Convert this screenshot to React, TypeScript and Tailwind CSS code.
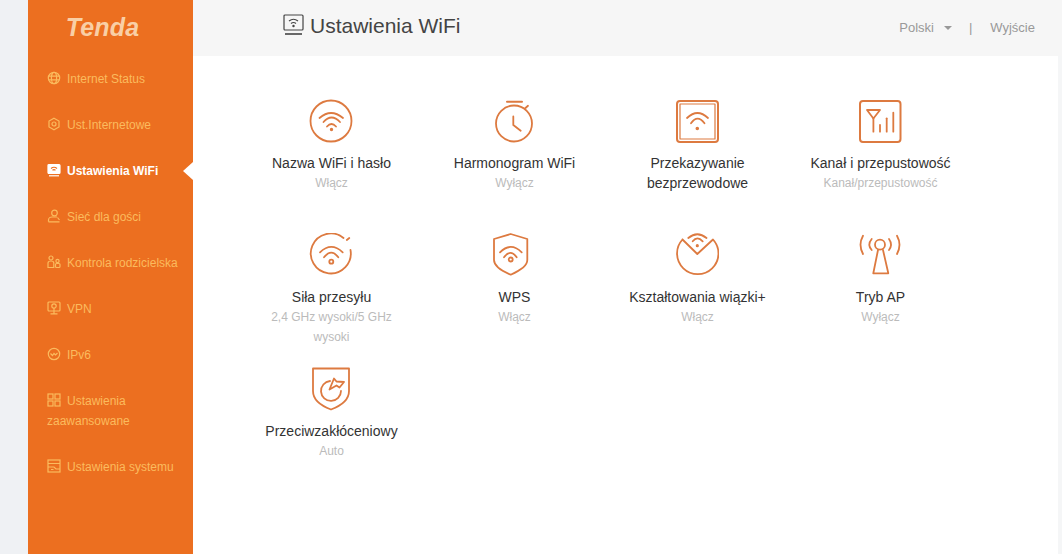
import type { ReactNode } from 'react';

const font = { fontFamily: '"Liberation Sans", Arial, sans-serif' };

function Big({ children }: { children: ReactNode }) {
    return (
        <svg width="44" height="44" viewBox="0 0 44 44" fill="none" stroke="#dd7a40" strokeWidth="1.8" strokeLinecap="round" strokeLinejoin="round" className="mr-[2px]">
            {children}
        </svg>
    );
}

const bigIcons: Record<string, ReactNode> = {
    name: (
        <>
            <circle cx="22" cy="22" r="20.5" />
            <path d="M10.5 19 Q22 9 34 19" />
            <path d="M14.5 23 Q22.5 14 31 23" />
            <path d="M18 27.5 Q22.5 22.5 27 27.5" />
            <circle cx="22.5" cy="30.5" r="0.8" fill="#dd7a40" />
        </>
    ),
    timer: (
        <>
            <circle cx="22" cy="24.5" r="18" />
            <path d="M15 2.8 H30" strokeWidth="2" />
            <path d="M33.5 9 L36 6.8" />
            <path d="M21.3 17.5 V26 L28.7 31.7" />
        </>
    ),
    bridge: (
        <>
            <rect x="2" y="2" width="41" height="41" rx="3" strokeWidth="2" />
            <rect x="5" y="5" width="35" height="35" strokeWidth="1.2" />
            <path d="M12 19 Q22.5 9 33 19" />
            <path d="M16 24.3 Q22.5 15 29.5 24.3" />
            <circle cx="22.3" cy="29.5" r="0.9" fill="#dd7a40" />
        </>
    ),
    channel: (
        <>
            <rect x="2" y="2" width="40.5" height="41" rx="3" strokeWidth="2" />
            <path d="M9 11 H22 L15.4 19.5 Z" />
            <path d="M15.4 19.5 V32.7" />
            <path d="M22 26 V32.7" />
            <path d="M28.7 19.3 V32.7" />
            <path d="M35.3 13.7 V32.7" />
        </>
    ),
    power: (
        <>
            <path d="M34.5 5 A20 20 0 1 0 41.5 17" />
            <path d="M37.8 7 L40.3 5" />
            <path d="M11 19.3 Q22.3 8.5 33.7 19.3" />
            <path d="M15 24.3 Q22.3 15 29.3 24.3" />
            <circle cx="22.3" cy="28.7" r="2" />
        </>
    ),
    wps: (
        <>
            <path d="M18.7 1 L35.3 6 V27 C35.3 33 26 38.5 18.7 41.7 C11 38.5 2 33 2 27 V6 Z" />
            <path d="M8 19.3 Q18.7 8.5 29.7 19.3" />
            <path d="M12 24.3 Q18.5 15.5 24.7 24.3" />
            <circle cx="18.7" cy="26.5" r="2" />
        </>
    ),
    beam: (
        <>
            <path d="M7.5 6.5 L22.3 21 L38 6.5 A20.7 20.7 0 1 1 7.5 6.5" />
            <path d="M13.3 5 Q22.3 -2.5 31.5 5" />
            <path d="M17.7 8.3 Q22.3 2.5 27.7 8.3" />
            <circle cx="22.3" cy="12.7" r="0.7" fill="#dd7a40" />
        </>
    ),
    ap: (
        <>
            <circle cx="22" cy="11.7" r="5" />
            <path d="M20 17 L15.3 40.3 H30.3 L25 17" />
            <path d="M5 2.7 Q0 11.7 5 21" />
            <path d="M13.7 6 Q9 11.7 13.7 17" />
            <path d="M39 2.7 Q44 11.7 39 21" />
            <path d="M31 6 Q35 11.7 31 17" />
        </>
    ),
    jam: (
        <>
            <path d="M4 1.5 H40 V24 C40 34 30 39.5 22 42.5 C14 39.5 4 34 4 24 Z" />
            <path d="M21 14 A10 10 0 1 0 32 24" />
            <path d="M20.5 22.5 L25 11.5 L27.5 14.5 L35 15 L30.5 20.5 L27.5 18.5 Z" />
        </>
    ),
};

const cards = [
    { icon: 'name', title: 'Nazwa WiFi i hasło', sub: 'Włącz' },
    { icon: 'timer', title: 'Harmonogram WiFi', sub: 'Wyłącz' },
    { icon: 'bridge', title: 'Przekazywanie bezprzewodowe', sub: '' },
    { icon: 'channel', title: 'Kanał i przepustowość', sub: 'Kanał/przepustowość' },
    { icon: 'power', title: 'Siła przesyłu', sub: '2,4 GHz wysoki/5 GHz wysoki' },
    { icon: 'wps', title: 'WPS', sub: 'Włącz' },
    { icon: 'beam', title: 'Kształtowania wiązki+', sub: 'Włącz' },
    { icon: 'ap', title: 'Tryb AP', sub: 'Wyłącz' },
    { icon: 'jam', title: 'Przeciwzakłóceniowy', sub: 'Auto' },
];

const smallIcons: Record<string, ReactNode> = {
    globe: (
        <>
            <circle cx="7" cy="7" r="5.7" />
            <ellipse cx="7" cy="7" rx="2.6" ry="5.7" />
            <path d="M1.5 5.2 H12.5 M1.5 8.8 H12.5" />
        </>
    ),
    net: (
        <>
            <path d="M7 1.2 L12 4 V10 L7 12.8 L2 10 V4 Z" />
            <circle cx="7" cy="7" r="2" />
        </>
    ),
    wifi: (
        <>
            <rect x="1" y="1.5" width="12" height="9" rx="1" fill="#fff" stroke="#fff" />
            <path d="M4 5.5 Q7 3 10 5.5 M5.5 7.2 Q7 6 8.5 7.2" stroke="#ec6f20" />
            <path d="M2 12.8 H12" />
        </>
    ),
    guest: (
        <>
            <circle cx="7.5" cy="4" r="2.8" />
            <path d="M1.5 12.8 V11 C1.5 9 3.5 8 5 8 H10" />
            <path d="M1.5 12.8 H12.5 M10.5 8.5 L12.5 11" />
        </>
    ),
    parent: (
        <>
            <circle cx="4" cy="3" r="2" />
            <path d="M1 12.5 V8 C1 6.5 2.5 6 4 6 C5.5 6 6.8 6.5 6.8 8 V12.5 Z" />
            <circle cx="10.5" cy="6" r="1.6" />
            <rect x="8.5" y="8.5" width="4.5" height="4" rx="1" />
        </>
    ),
    vpn: (
        <>
            <rect x="1" y="1" width="12" height="9" rx="1" />
            <circle cx="7" cy="5" r="2.2" />
            <path d="M7 7 V12.8 M3.5 12.8 H10.5" />
        </>
    ),
    ipv6: (
        <>
            <circle cx="7" cy="7" r="5.7" />
            <path d="M3.5 6.5 L5.5 8.5 L7 6.5 L8.5 8 L10.5 6" />
        </>
    ),
    grid: (
        <>
            <rect x="1" y="1" width="5" height="5" />
            <rect x="8" y="1" width="5" height="5" />
            <rect x="1" y="8" width="5" height="5" />
            <rect x="8" y="8" width="5" height="5" />
        </>
    ),
    system: (
        <>
            <rect x="1" y="1" width="12" height="12" />
            <path d="M1 4.5 H13 M1 8 H7 L9 10 H13 M4 10.5 H6.5" />
        </>
    ),
};

const menu = [
    { icon: 'globe', label: 'Internet Status' },
    { icon: 'net', label: 'Ust.Internetowe' },
    { icon: 'wifi', label: 'Ustawienia WiFi', active: true },
    { icon: 'guest', label: 'Sieć dla gości' },
    { icon: 'parent', label: 'Kontrola rodzicielska' },
    { icon: 'vpn', label: 'VPN' },
    { icon: 'ipv6', label: 'IPv6' },
    { icon: 'grid', label: 'Ustawienia zaawansowane' },
    { icon: 'system', label: 'Ustawienia systemu' },
];

export default function App() {
    return (
        <div className="flex h-[554px] w-[1062px] overflow-hidden bg-[#eff1f4] pl-7" style={font}>
            {/* Sidebar */}
            <aside className="w-[165px] shrink-0 bg-[#ec6f20]">
                <div className="flex h-14 items-center justify-center pr-[16px]">
                    <span className="text-[25px] font-bold italic tracking-[0.2px] text-[#f9cfa6]">Tenda</span>
                </div>
                <ul>
                    {menu.map(item => (
                        <li
                            key={item.label}
                            className={`relative py-[13px] pl-[19px] pr-[10px] text-xs leading-5 ${item.active ? 'font-bold text-white' : 'text-[#fbbb5e]'}`}
                        >
                            <svg width="14" height="14" viewBox="0 0 14 14" fill="none" stroke={item.active ? '#fff' : '#fbbb5e'} strokeWidth="1.2" className="mr-[6px] inline-block align-[-2px]">
                                {smallIcons[item.icon]}
                            </svg>
                            {item.label}
                            {item.active && (
                                <span className="absolute right-0 top-1/2 h-0 w-0 -translate-y-1/2 border-y-[9px] border-r-[10px] border-y-transparent border-r-white" />
                            )}
                        </li>
                    ))}
                </ul>
            </aside>

            {/* Main */}
            <main className="flex flex-1 flex-col bg-white">
                <header className="flex h-14 shrink-0 items-center justify-between bg-[#f6f6f6] pl-[90px] pr-[27px]">
                    <div className="flex items-center gap-[6px] pb-1 text-[21px] text-[#444]">
                        <svg width="21" height="22" viewBox="0 0 21 22" fill="none" stroke="#444" strokeWidth="1.2" className="-mt-[2px]">
                            <rect x="1" y="1" width="19" height="15" rx="1" />
                            <path d="M2 20 H19" strokeWidth="1.6" />
                            <path d="M6 7 Q10.5 3.5 15 7 M8 9.5 Q10.5 7.5 13 9.5" />
                            <circle cx="10.5" cy="12" r="0.6" fill="#444" />
                        </svg>
                        Ustawienia WiFi
                    </div>
                    <div className="flex items-center text-[13px] text-[#999]">
                        <span>Polski</span>
                        <span className="ml-[10px] h-0 w-0 border-x-4 border-t-4 border-x-transparent border-t-[#999]" />
                        <span className="ml-[17px]">|</span>
                        <span className="ml-[18px]">Wyjście</span>
                    </div>
                </header>

                <div className="flex-1 border-r-4 border-[#f5f6f7]">
                    <div className="grid grid-cols-[repeat(4,183px)] auto-rows-[134px] pl-[47px] pt-[43px]">
                        {cards.map(card => (
                            <div key={card.icon} className="flex flex-col items-center text-center">
                                <Big>{bigIcons[card.icon]}</Big>
                                <div className="mt-[10px] w-[150px] whitespace-normal text-sm leading-5 text-[#333]">
                                    <span className={card.icon === 'channel' || card.icon === 'beam' || card.icon === 'jam' || card.icon === 'name' ? 'whitespace-nowrap' : ''}>{card.title}</span>
                                </div>
                                {card.sub && <div className="w-[150px] text-xs leading-5 text-[#bbb]">{card.sub}</div>}
                            </div>
                        ))}
                    </div>
                </div>
            </main>
        </div>
    );
}
